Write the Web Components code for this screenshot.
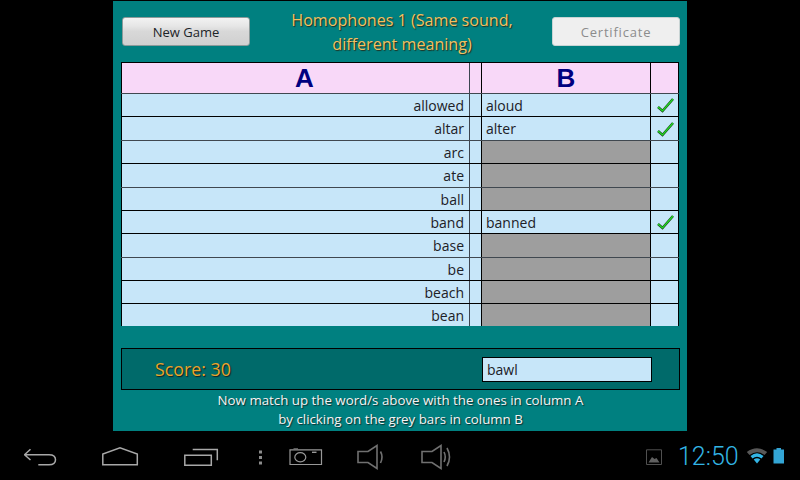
<!DOCTYPE html>
<html>
<head>
<meta charset="utf-8">
<style>
  html, body { margin: 0; padding: 0; background: #000; }
</style>
</head>
<body>
<tablet-screen></tablet-screen>
<script>
const appFont = '"Open Sans", "DejaVu Sans", sans-serif';

class GameButton extends HTMLElement {
    constructor() {
        super();
        this.attachShadow({ mode: 'open' });
        this.shadowRoot.innerHTML = `
            <style>
                :host {
                    display: flex;
                    align-items: center;
                    justify-content: center;
                    box-sizing: border-box;
                    width: 128px;
                    height: 29px;
                    border: 1px solid #8c9a9a;
                    border-radius: 3px;
                    background: linear-gradient(#f2f2f2 0%, #e6e6e6 30%, #d8d8d8 50%, #d0d0d0 100%);
                    color: #1c2428;
                    font: 13px ${appFont};
                }
                :host([disabled]) {
                    background: #efefef;
                    border-color: #c8d4d4;
                    color: #8c8c8c;
                    letter-spacing: 0.8px;
                }
            </style>
            <slot></slot>
        `;
    }
}

class GameHeader extends HTMLElement {
    constructor() {
        super();
        this.attachShadow({ mode: 'open' });
        this.shadowRoot.innerHTML = `
            <style>
                :host {
                    display: grid;
                    grid-template-columns: 130px 1fr 128px;
                    align-items: center;
                    height: 61px;
                    padding-left: 1px;
                }
                .title {
                    text-align: center;
                    color: #f2c060;
                    font: 16.1px/24px ${appFont};
                    text-shadow: 1px 1px 1px #203020;
                }
            </style>
            <game-button>New Game</game-button>
            <div class="title">Homophones 1 (Same sound,<br>different meaning)</div>
            <game-button disabled>Certificate</game-button>
        `;
    }
}

class MatchRow extends HTMLElement {
    constructor() {
        super();
        this.attachShadow({ mode: 'open' });
    }

    connectedCallback() {
        const a = this.getAttribute('a') || '';
        const b = this.getAttribute('b');
        const head = this.hasAttribute('head');
        const lineColor = this.getAttribute('line') || '#000';
        const check = `<svg width="20" height="18" viewBox="0 0 20 18">
            <path d="M3 11 L7.5 15 L18 3" fill="none" stroke="#1c4a1c" stroke-width="2.6"/>
            <path d="M3 11 L7.5 15 L18 3" fill="none" stroke="#22e022" stroke-width="1.2"/>
        </svg>`;
        this.shadowRoot.innerHTML = `
            <style>
                :host {
                    display: grid;
                    grid-template-columns: 348px 12px 169px 29px;
                    box-sizing: border-box;
                    background: ${head ? '#f8d8f8' : '#c7e6f9'};
                    border-top: 1px solid ${lineColor};
                    color: #202026;
                    font: 14px ${appFont};
                }
                .cell {
                    box-sizing: border-box;
                    display: flex;
                    align-items: center;
                    min-width: 0;
                    border-left: 1px solid #000;
                }
                .a { justify-content: flex-end; padding-right: 5px; }
                .gap { border-left-color: #3c4450; }
                .b { padding-left: 4px; }
                .b.empty { background: #9e9e9e; }
                .tick { justify-content: center; border-right: 1px solid #000; }
                :host([head]) .cell {
                    justify-content: center;
                    padding: 0 0 1px;
                    color: #000080;
                    font: bold 26px "Liberation Sans", sans-serif;
                }
                :host([head]) .a { padding-left: 18px; }
            </style>
            <div class="cell a">${a}</div>
            <div class="cell gap"></div>
            <div class="cell b ${b === null ? 'empty' : ''}">${b || ''}</div>
            <div class="cell tick">${this.hasAttribute('done') ? check : ''}</div>
        `;
    }
}

class MatchTable extends HTMLElement {
    constructor() {
        super();
        this.attachShadow({ mode: 'open' });
        this.shadowRoot.innerHTML = `
            <style>
                :host {
                    display: grid;
                    grid-template-rows: 31px 23px 24px 23px 24px 23px 23px 24px 23px 23px 23px;
                    width: 558px;
                }
            </style>
            <slot></slot>
        `;
    }
}

class ScorePanel extends HTMLElement {
    constructor() {
        super();
        this.attachShadow({ mode: 'open' });
        this.shadowRoot.innerHTML = `
            <style>
                :host {
                    display: flex;
                    align-items: center;
                    justify-content: space-between;
                    box-sizing: border-box;
                    width: 559px;
                    height: 42px;
                    margin-top: 22px;
                    padding: 0 27px 0 33px;
                    border: 1px solid #000;
                    background: #006a6a;
                }
                .score {
                    color: #eaa42a;
                    font: 17.8px ${appFont};
                    text-shadow: 1px 1px 1px #102020;
                }
                .word {
                    box-sizing: border-box;
                    width: 170px;
                    height: 25px;
                    padding: 0 4px;
                    border: 1px solid #000;
                    background: #c7e6f9;
                    color: #202026;
                    font: 14px/23px ${appFont};
                }
            </style>
            <div class="score">Score: 30</div>
            <div class="word">bawl</div>
        `;
    }
}

class NavBar extends HTMLElement {
    constructor() {
        super();
        this.attachShadow({ mode: 'open' });
        this.shadowRoot.innerHTML = `
            <style>
                :host {
                    display: flex;
                    align-items: center;
                    height: 48px;
                    margin-top: 1px;
                    padding-left: 24px;
                    background: #000;
                }
                svg { display: block; flex: none; fill: none; }
                .main { stroke: #a8a8a8; stroke-width: 1.5; }
                .sound { stroke: #707070; stroke-width: 1.6; }
                .time {
                    margin-left: 16px;
                    width: 60px;
                    color: #33b5e5;
                    font: 300 25px "Roboto", sans-serif;
                }
            </style>
            <svg class="main" width="33" height="48" style="margin-right:45px">
                <path d="M6.5 17.3 L0.5 22.7 L6.5 28 M0.5 22.7 H25 Q31.5 22.7 31.5 27.7 Q31.5 32.7 25 32.7 H14.3"/>
            </svg>
            <svg class="main" width="38" height="48" style="margin-right:44px">
                <path d="M0.8 32.7 V22 L18 15.7 L35.3 22 V32.7 Z"/>
            </svg>
            <svg class="main" width="36" height="48" style="margin-right:38px">
                <path d="M0.8 23.3 H27.3 V33.3 H0.8 Z M8.7 17.5 H33.3 V28.3"/>
            </svg>
            <svg width="6" height="48" style="margin-right:25px">
                <path d="M1 18.5h3v3h-3z M1 24h3v3h-3z M1 29.5h3v3h-3z" fill="#8c8c8c"/>
            </svg>
            <svg width="35" height="48" style="margin-right:33px">
                <path d="M1 17.8 H32.5 V32.5 H1 Z" stroke="#989898" stroke-width="1.2"/>
                <path d="M4.5 16.8 H9" stroke="#808080"/>
                <ellipse cx="11.3" cy="25.3" rx="5.5" ry="4.6" stroke="#989898" stroke-width="1.2"/>
                <path d="M23 20.3 H27.5" stroke="#989898" stroke-width="1.4"/>
            </svg>
            <svg class="sound" width="28" height="48" style="margin-right:36px">
                <path d="M1 19.5 H11 L20 13.5 V36.5 L11 30.5 H1 Z"/>
                <path d="M23.5 19.5 Q26.5 25 23.5 31"/>
            </svg>
            <svg class="sound" width="30" height="48" style="margin-right:195px">
                <path d="M1 19.5 H11 L20 13.5 V36.5 L11 30.5 H1 Z"/>
                <path d="M23 20 Q25.5 25 23 30 M26 16 Q31 25 26 34"/>
            </svg>
            <svg width="16" height="48">
                <path d="M0.5 17.8 H15.5 V32.5 H0.5 Z" stroke="#505050"/>
                <path d="M2.5 30.5 L6 25 L8.5 27 L10.5 26 L13.5 30.5 Z" fill="#606060"/>
            </svg>
            <div class="time">12:50</div>
            <svg width="22" height="48" style="margin-left:8px">
                <path d="M0.8 20 Q11 12.5 21.2 20 L18.5 23 Q11 17.5 3.5 23 Z" fill="#585858"/>
                <path d="M4.5 24 Q11 18.5 17.5 24 L15.5 26.5 Q11 23 6.5 26.5 Z" fill="#33b5e5"/>
                <path d="M7.7 27.5 Q11 25 14.3 27.5 L11 31.5 Z" fill="#33b5e5"/>
            </svg>
            <svg width="12" height="48" style="margin-left:5px">
                <path d="M3.5 16 H8 V17.5 H11 V31.5 H0.5 V17.5 H3.5 Z" fill="#33a5d5"/>
            </svg>
        `;
    }
}

class TabletScreen extends HTMLElement {
    constructor() {
        super();
        this.attachShadow({ mode: 'open' });
        this.shadowRoot.innerHTML = `
            <style>
                :host {
                    display: flex;
                    flex-direction: column;
                    width: 800px;
                    height: 480px;
                    overflow: hidden;
                    background: #000;
                }
                .game {
                    box-sizing: border-box;
                    width: 574px;
                    height: 430px;
                    margin: 1px 0 0 113px;
                    padding: 0 7px 0 8px;
                    background: #008080;
                }
                .help {
                    padding-top: 1px;
                    text-align: center;
                    color: #f4f4f4;
                    font: 13.3px/19px ${appFont};
                    text-shadow: 1px 1px 1px #103030;
                }
            </style>
            <div class="game">
                <game-header></game-header>
                <match-table>
                    <match-row head a="A" b="B" line="#000"></match-row>
                    <match-row a="allowed" b="aloud" done line="#404850"></match-row>
                    <match-row a="altar" b="alter" done></match-row>
                    <match-row a="arc" line="#404850"></match-row>
                    <match-row a="ate"></match-row>
                    <match-row a="ball" line="#404850"></match-row>
                    <match-row a="band" b="banned" done></match-row>
                    <match-row a="base"></match-row>
                    <match-row a="be" line="#404850"></match-row>
                    <match-row a="beach"></match-row>
                    <match-row a="bean"></match-row>
                </match-table>
                <score-panel></score-panel>
                <div class="help">Now match up the word/s above with the ones in column A<br>by clicking on the grey bars in column B</div>
            </div>
            <nav-bar></nav-bar>
        `;
    }
}

customElements.define('game-button', GameButton);
customElements.define('game-header', GameHeader);
customElements.define('match-row', MatchRow);
customElements.define('match-table', MatchTable);
customElements.define('score-panel', ScorePanel);
customElements.define('nav-bar', NavBar);
customElements.define('tablet-screen', TabletScreen);
</script>
</body>
</html>
